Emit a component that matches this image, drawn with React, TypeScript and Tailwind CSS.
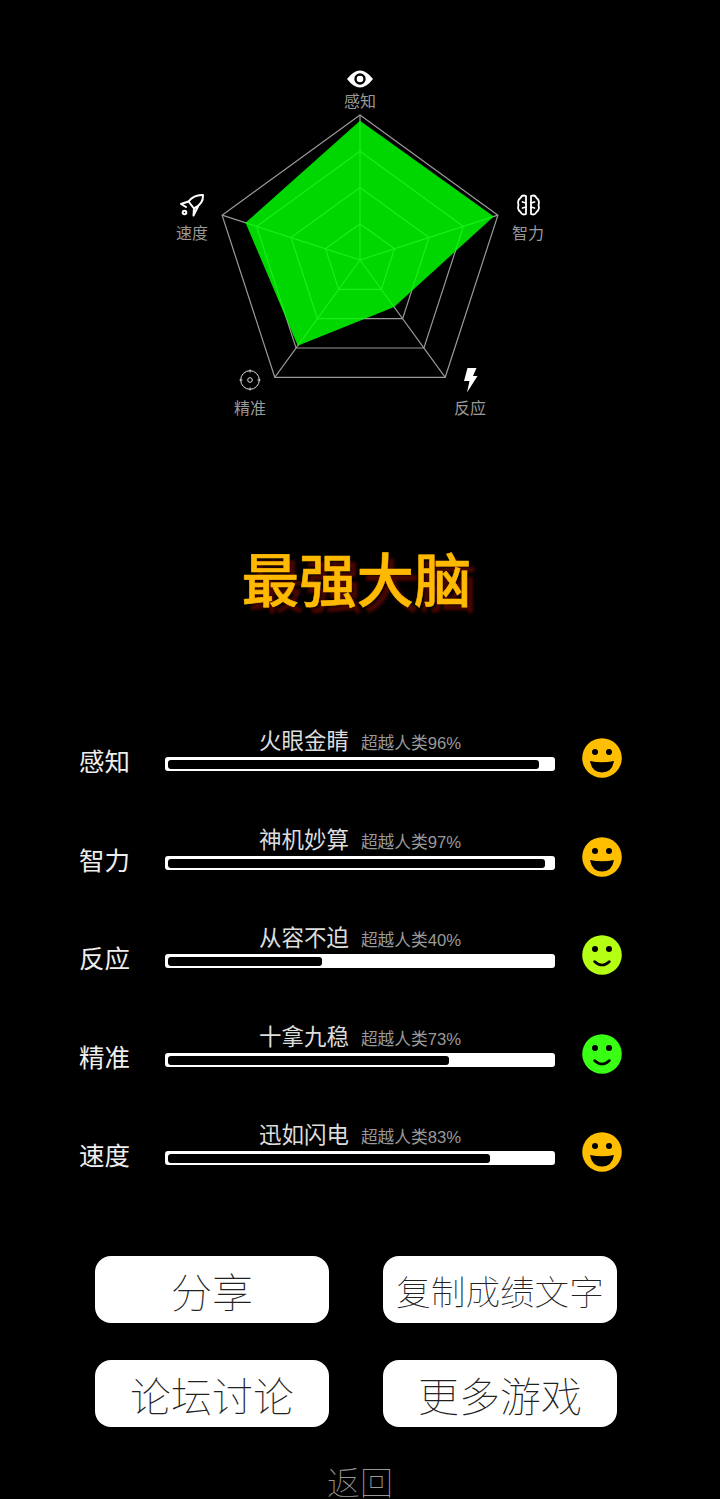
const CX = 360
const CY = 260
const R = 145

// fill = black part of the bar in px, the percentages on screen are rounded
const stats = [
  { label: '感知', title: '火眼金睛', pct: 96, fill: 371, face: 'big', color: '#ffbf00' },
  { label: '智力', title: '神机妙算', pct: 97, fill: 377, face: 'big', color: '#ffbf00' },
  { label: '反应', title: '从容不迫', pct: 40, fill: 154, face: 'small', color: '#b4ff14' },
  { label: '精准', title: '十拿九稳', pct: 73, fill: 281, face: 'small', color: '#38ff14' },
  { label: '速度', title: '迅如闪电', pct: 83, fill: 322, face: 'big', color: '#ffbf00' },
]

function point(i: number, r: number) {
  const a = (Math.PI * 2 * i) / 5
  return [CX + r * Math.sin(a), CY - r * Math.cos(a)]
}

function ring(r: number) {
  return [0, 1, 2, 3, 4].map((i) => point(i, r).join(',')).join(' ')
}

function Radar() {
  const data = stats.map((s, i) => point(i, (R * s.pct) / 100).join(',')).join(' ')
  return (
    <svg viewBox="160 60 400 370" className="block w-[400px] h-[370px] mx-auto">
      {[0.25, 0.5, 0.75, 1].map((k) => (
        <polygon key={k} points={ring(R * k)} fill="none" stroke="#999" strokeWidth="1.2" />
      ))}
      {[0, 1, 2, 3, 4].map((i) => {
        const [x, y] = point(i, R)
        return <line key={i} x1={CX} y1={CY} x2={x} y2={y} stroke="#999" strokeWidth="1.2" />
      })}
      <polygon points={data} fill="#00ff00" fillOpacity="0.84" />

      {/* eye */}
      <path d="M347 79 Q360 62 373 79 Q360 96 347 79Z" fill="#fff" />
      <circle cx="360" cy="79" r="4.500" fill="none" stroke="#000" strokeWidth="2.400" />

      {/* brain */}
      <g fill="none" stroke="#fff" strokeWidth="1.800" strokeLinejoin="round" strokeLinecap="round">
        <path d="M526 196 Q522 194.500 520.500 198 Q517 200.500 518.500 205 Q517 209.500 520.500 212 Q522 215.500 526 214Z" />
        <path d="M531 196 Q535 194.500 536.500 198 Q540 200.500 538.500 205 Q540 209.500 536.500 212 Q535 215.500 531 214Z" />
        <path d="M522.500 202 L526 203 M522.500 208 L526 207 M534.500 202 L531 203 M534.500 208 L531 207" />
      </g>

      {/* bolt */}
      <path d="M467.500 368 L476.500 368 L473 376 L477.500 376 L467 392.500 L469.500 381 L464 381Z" fill="#fff" />

      {/* crosshair */}
      <g fill="none" stroke="#ddd" strokeWidth="1">
        <circle cx="250" cy="380" r="9.300" />
        <circle cx="250" cy="380" r="2.300" />
        <path d="M250 369.500V372.500 M250 387.500V390.500 M239.500 380H242.500 M257.500 380H260.500" />
      </g>

      {/* rocket */}
      <g fill="none" stroke="#fff" strokeWidth="2" strokeLinejoin="round" strokeLinecap="round">
        <path d="M203 195 Q194 194.500 188.500 201.500 L194 208.500 Q203.500 204 203 195Z" />
        <path d="M188.500 201.500 L181 204 L186 207 M194 208.500 L193.500 215.500 L198 206.500" />
        <circle cx="184.500" cy="212.500" r="1.800" />
      </g>

      <g fill="#999" fontSize="16" textAnchor="middle">
        <text x="360" y="107">感知</text>
        <text x="528" y="239">智力</text>
        <text x="470" y="414">反应</text>
        <text x="250" y="414">精准</text>
        <text x="192" y="239">速度</text>
      </g>
    </svg>
  )
}

function Face({ kind, color }: { kind: string; color: string }) {
  return (
    <svg viewBox="0 0 40 40" className="w-10 h-10 shrink-0">
      <circle cx="20" cy="20" r="19.800" fill={color} />
      <circle cx="13" cy="14" r="3" fill="#000" />
      <circle cx="27" cy="14" r="3" fill="#000" />
      {kind === 'big' ? (
        <path d="M8 23 Q20 25.500 32 23 Q30 34.500 20 34.500 Q10 34.500 8 23Z" fill="#000" />
      ) : (
        <path d="M12.500 26.500 Q20 33.500 27.500 26.500" fill="none" stroke="#000" strokeWidth="2.500" strokeLinecap="round" />
      )}
    </svg>
  )
}

function StatRow({ s }: { s: (typeof stats)[number] }) {
  return (
    <div className="flex items-start h-[98.5px] pl-[79px]">
      <div className="w-[86px] mt-[18px] text-[25.500px] leading-[36px] text-[#eee]">{s.label}</div>
      <div className="w-[390px]">
        <div className="flex items-baseline justify-center gap-3 h-[31px] leading-[32px]">
          <span className="text-[22.500px] text-[#ddd]">{s.title}</span>
          <span className="text-[16.700px] text-[#999]">超越人类{s.pct}%</span>
        </div>
        <div className="h-[14px] bg-white rounded-[3px] pt-[3px] pl-[3px]">
          <div className="h-[9px] bg-black rounded-[3px]" style={{ width: s.fill }} />
        </div>
      </div>
      <div className="ml-[27px] mt-[12px]">
        <Face kind={s.face} color={s.color} />
      </div>
    </div>
  )
}

function Btn({ text, size }: { text: string; size: string }) {
  return (
    <button className={`h-[67px] pt-[8px] bg-white rounded-[16px] font-thin text-[#222] ${size}`}>
      {text}
    </button>
  )
}

export default function App() {
  return (
    <div className="w-[720px] h-[1499px] overflow-hidden bg-black pt-[60px] font-['Liberation_Sans','Noto_Sans_CJK_SC',sans-serif]">
      <Radar />

      <h1 className="mt-[112px] h-[80px] pr-[7px] leading-[80px] text-center text-[57.500px] font-medium text-[#ffb900] [-webkit-text-stroke:0.6px_#ffb900] [text-shadow:6px_6px_3px_#4a0600]">
        最强大脑
      </h1>

      <div className="mt-[104px]">
        {stats.map((s) => (
          <StatRow key={s.label} s={s} />
        ))}
      </div>

      <div className="mt-[37.500px] ml-[95px] w-[522px] grid grid-cols-2 gap-x-[54px] gap-y-[37px]">
        <Btn text="分享" size="text-[41px]" />
        <Btn text="复制成绩文字" size="text-[34.600px]" />
        <Btn text="论坛讨论" size="text-[41px]" />
        <Btn text="更多游戏" size="text-[41px]" />
      </div>

      <div className="mt-[36px] h-[40px] leading-[42px] text-center text-[33px] font-thin text-[#999]">返回</div>
    </div>
  )
}
